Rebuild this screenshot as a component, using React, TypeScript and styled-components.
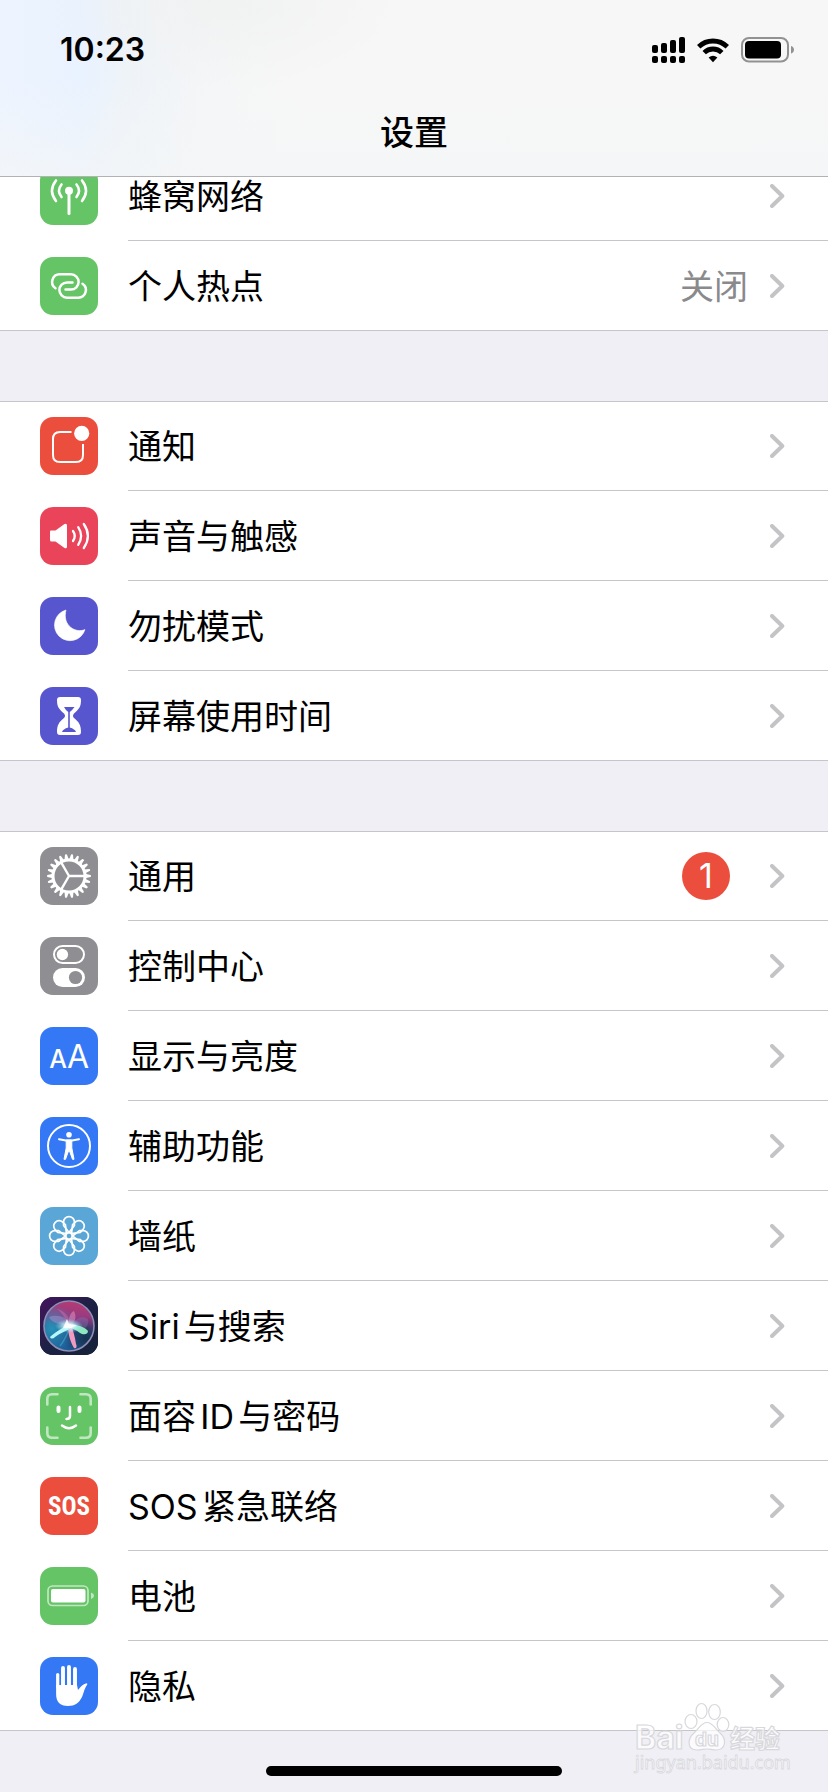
import React from "react";
import styled, { createGlobalStyle } from "styled-components";

const GlobalStyle = createGlobalStyle`
  * { box-sizing: border-box; }
  html, body { margin: 0; padding: 0; }
  body {
    background: #f0eff5;
    color: #000;
    font-family: Inter, "Noto Sans CJK SC", sans-serif;
    font-size: 34px;
    line-height: 48px;
    text-autospace: normal;
  }
`;

const Screen = styled.div`
  position: relative;
  min-height: 100vh;
`;

const Header = styled.header`
  position: sticky;
  top: 0;
  z-index: 2;
  background:
    radial-gradient(ellipse 180px 90px at 27% 0, rgba(240, 241, 241, 0.9), rgba(242, 243, 243, 0)),
    linear-gradient(to bottom, rgba(247, 247, 247, 0) 45%, rgba(244, 246, 247, 0.7) 100%),
    linear-gradient(to right, #edf4ff 0, #e9f2ff 10%, #eef3f8 15%, #f5f6f7 26%, #f7f7f7 36%);
  border-bottom: 1px solid #b2b2b4;
`;

const StatusBar = styled.div`
  display: flex;
  align-items: center;
  justify-content: space-between;
  height: 88px;
  padding: 11px 33px 0 60px;
`;

const Clock = styled.time`
  font-size: 32px;
  font-weight: 600;
`;

const StatusIcons = styled.div`
  display: flex;
  align-items: center;
  gap: 12px;
`;

const Title = styled.h1`
  display: flex;
  align-items: center;
  justify-content: center;
  height: 88px;
  margin: 0;
  padding-top: 2px;
  font-size: 34px;
  font-weight: 500;
`;

const Content = styled.main`
  display: flex;
  flex-direction: column;
  gap: 70px;
  margin-top: -26px;
  padding-bottom: 61px;
`;

const Group = styled.ul`
  margin: 0;
  padding: 0;
  list-style: none;
  background: #fff;
  box-shadow: inset 0 1px 0 #c6c5ca;
`;

const Item = styled.li`
  &:last-child > a { border-bottom: 1px solid #c6c5ca; }
  &:last-child > a > div { border-bottom: 0; height: 89px; }
`;

const Row = styled.a`
  display: flex;
  align-items: flex-start;
  gap: 30px;
  height: 90px;
  padding-left: 40px;
  color: inherit;
  text-decoration: none;
`;

const Tile = styled.svg`
  flex: none;
  width: 58px;
  height: 58px;
  margin-top: 16px;
  border-radius: 13px;
  background: ${(p: { $color: string }) => p.$color};
`;

const RowBody = styled.div`
  display: flex;
  flex: 1;
  align-items: center;
  height: 90px;
  padding-right: 43px;
  border-bottom: 1px solid #c6c5ca;
`;

const Label = styled.span`
  flex: 1;
  padding-top: 2px;
`;

const Value = styled.span`
  margin-right: 22px;
  padding-top: 2px;
  color: #8a8a8d;
`;

const Badge = styled.span`
  width: 48px;
  height: 48px;
  margin-right: 40px;
  border-radius: 50%;
  background: #eb4e3d;
  color: #fff;
  text-align: center;
`;

const Watermark = styled.svg`
  position: absolute;
  right: 40px;
  bottom: 16px;
  width: 160px;
  height: 76px;
  overflow: visible;
  pointer-events: none;
`;

const HomeIndicator = styled.div`
  position: fixed;
  z-index: 3;
  left: 50%;
  bottom: 16px;
  width: 296px;
  height: 10px;
  margin-left: -148px;
  border-radius: 5px;
  background: #000;
`;

const Chevron = () => (
  <svg width="15" height="24" viewBox="0 0 15 24" aria-hidden="true">
    <path d="M2 2L12.300 12L2 22" fill="none" stroke="#c4c4c6" strokeWidth="4" strokeLinecap="round" strokeLinejoin="round" />
  </svg>
);

const GREEN = "#65c466";
const RED = "#eb4e3d";
const PINK = "#ea445a";
const INDIGO = "#5756ce";
const GREY = "#8e8e93";
const BLUE = "#3478f6";
const SKY = "#5aa7d7";

const stroke = (width: number) => ({
  fill: "none",
  stroke: "#fff",
  strokeWidth: width,
  strokeLinecap: "round" as const,
  strokeLinejoin: "round" as const,
});

const cellular = (
  <>
    <circle cx="29" cy="23.700" r="4" fill="#fff" />
    <path d="M29 25V46.500" {...stroke(3)} />
    <path d="M21.500 17.500Q16.500 23.700 21.500 30M36.500 17.500Q41.500 23.700 36.500 30M16 13.500Q8 23.700 16 34M42 13.500Q50 23.700 42 34" {...stroke(2.6)} />
  </>
);

const link = "M15.500 31.200A7.600 7.600 0 0 1 20 17.300H31A7.600 7.600 0 0 1 31 32.500H25.500";
const hotspot = (
  <g {...stroke(2.5)}>
    <path d={link} />
    <path d={link} transform="rotate(180 29 29)" />
  </g>
);

const notifications = (
  <>
    <path d="M31.500 15H20Q13 15 13 22V38Q13 45 20 45H36Q43 45 43 38V27" fill="none" stroke="#fff" strokeWidth="2" />
    <circle cx="41.700" cy="16.400" r="7.600" fill="#fff" />
  </>
);

const sounds = (
  <>
    <path d="M11 23.500H15.500L24.500 17Q27 15.800 27 18.500V39.500Q27 42.200 24.500 41L15.500 34.500H11.500Q10 34.500 10 33V24.500Q10 23.500 11 23.500Z" fill="#fff" />
    <path d="M33 24Q36.500 29 33 34M38.200 20.200Q44 29 38.200 37.800M43.800 17Q52 29 43.800 41" {...stroke(2.3)} />
  </>
);

const moon = <path d="M26 13A15.600 15.600 0 1 0 45 32.600C36 36.500 22 29 26 13Z" fill="#fff" stroke="#fff" strokeWidth="0.600" strokeLinejoin="round" />;

const hourglass = (
  <>
    <path d="M20 10H38Q41 10 41 13C41 20 39 22 34 26.500Q32 28.800 34 31C39 35 41 38 41 45Q41 48 38 48H20Q17 48 17 45C17 38 19 35 24 31Q26 28.800 24 26.500C19 22 17 20 17 13Q17 10 20 10Z" fill="#fff" />
    <path d="M24 20H34.500Q32.500 23 29.800 25V40.500Q35 42 36 45H22Q23 42 28.200 40.500V25Q25.500 23 24 20Z" fill={INDIGO} />
  </>
);

const teeth = Array.from({ length: 22 }, (_, i) => i * (360 / 22));
const gear = (
  <>
    {teeth.map((angle) => (
      <path key={angle} d="M45 26.800L50.600 28Q51.500 29 50.600 30L45 31.200Z" fill="#fff" transform={`rotate(${angle} 29 29)`} />
    ))}
    <circle cx="29" cy="29" r="16" fill="none" stroke="#fff" strokeWidth="3" />
    <path d="M45 29H29L21 15.200M29 29L21 42.800" {...stroke(2.4)} />
  </>
);

const controls = (
  <>
    <rect x="14" y="9" width="30" height="17" rx="8.500" fill="none" stroke="#fff" strokeWidth="2" />
    <circle cx="22.400" cy="17.500" r="5.700" fill="#fff" />
    <rect x="13" y="31" width="32" height="19" rx="9.500" fill="#fff" />
    <circle cx="35.500" cy="40.500" r="6.600" fill={GREY} />
  </>
);

const display = (
  <g fill="#fff" fontFamily="Inter, sans-serif" textAnchor="middle">
    <text x="18" y="41" fontSize="25" fontWeight="500">A</text>
    <text x="38" y="41" fontSize="32">A</text>
  </g>
);

const accessibility = (
  <>
    <circle cx="29" cy="29" r="21" fill="none" stroke="#fff" strokeWidth="2" />
    <circle cx="29" cy="17.800" r="2.800" fill="#fff" />
    <path d="M19 22.200L26 23.500H32L39 22.200" {...stroke(2)} />
    <path d="M26.200 23H31.800V31L34 42.300H32.500L29.500 34H28.500L25.500 42.300H24L26.200 31Z" fill="#fff" stroke="#fff" strokeWidth="1" strokeLinejoin="round" />
  </>
);

const petals = [0, 45, 90, 135, 180, 225, 270, 315];
const wallpaper = (
  <g fill="none" stroke="#fff" strokeWidth="1.700">
    {petals.map((angle) => (
      <path
        key={angle}
        d="M29 25.500L23.600 18.500V15A5.400 5.400 0 0 1 34.400 15V18.500Z"
        transform={`rotate(${angle} 29 29)`}
      />
    ))}
    <circle cx="29" cy="29" r="3.300" />
  </g>
);

const siri = (
  <>
    <defs>
      <linearGradient id="siri-tile" x1="0" y1="0" x2="1" y2="1">
        <stop offset="0" stopColor="#45145f" />
        <stop offset="0.500" stopColor="#1d2145" />
        <stop offset="1" stopColor="#152238" />
      </linearGradient>
      <linearGradient id="siri-orb" x1="0.600" y1="0" x2="0.400" y2="1">
        <stop offset="0" stopColor="#b83a72" />
        <stop offset="0.350" stopColor="#8c3c86" />
        <stop offset="0.600" stopColor="#2c4a86" />
        <stop offset="1" stopColor="#1c5f9a" />
      </linearGradient>
      <radialGradient id="siri-teal" cx="0.150" cy="0.550" r="0.500">
        <stop offset="0" stopColor="#22a5c4" stopOpacity="0.800" />
        <stop offset="1" stopColor="#22a5c4" stopOpacity="0" />
      </radialGradient>
      <radialGradient id="siri-shade" cx="0.850" cy="0.750" r="0.450">
        <stop offset="0" stopColor="#123048" stopOpacity="0.900" />
        <stop offset="1" stopColor="#123048" stopOpacity="0" />
      </radialGradient>
      <radialGradient id="siri-core">
        <stop offset="0" stopColor="#fff" />
        <stop offset="0.350" stopColor="#d8fbff" stopOpacity="0.800" />
        <stop offset="1" stopColor="#8fe9f5" stopOpacity="0" />
      </radialGradient>
    </defs>
    <rect width="58" height="58" fill="url(#siri-tile)" />
    <circle cx="29" cy="29" r="24.500" fill="url(#siri-orb)" />
    <circle cx="29" cy="29" r="24.500" fill="url(#siri-teal)" />
    <circle cx="29" cy="29" r="24.500" fill="url(#siri-shade)" />
    <circle cx="29" cy="29" r="25" fill="none" stroke="#8f8fb5" strokeWidth="1.600" />
    <path d="M30 28C18 28 11 25 9 20C16 17 28 20 31 28Z" fill="#d0a0e0" opacity="0.350" />
    <path d="M29 29C28 20 31 15 34 14C37 20 35 26 30 29Z" fill="#ffb0d0" opacity="0.400" />
    <path d="M17 12C24 13 30 20 31 28L27 26C25 20 21 15 17 12Z" fill="#f07ab0" opacity="0.350" />
    <path d="M31 28C36 21 43 18 48 22C49 26 47 30 45 31Z" fill="#8d7ab8" opacity="0.350" />
    <path d="M30 28C22 30 13 37 10 40C11 42 13 42 15 40C20 36 27 34 32 30Z" fill="#b5f7fa" />
    <path d="M28 28C36 27 45 30 48 34C48 38 43 38 40 36C36 33 33 31 28 31Z" fill="#8ce8c0" />
    <path d="M28 29C28 38 31 46 34 51C37 52 37 49 36 47C35 40 33 33 31 28Z" fill="#f49ac0" />
    <path d="M30 30C27 38 24 44 20 49" stroke="#41b5e0" strokeWidth="1.500" opacity="0.500" fill="none" />
    <ellipse cx="29" cy="29" rx="14" ry="7" fill="url(#siri-core)" />
    <path d="M27 22L29 27L37 28L31 31L23 31Z" fill="#fff" opacity="0.850" />
  </>
);

const face = (
  <>
    <path
      d="M7.300 17.500V12Q7.300 7.300 12 7.300H17.500M40.500 7.300H46Q50.700 7.300 50.700 12V17.500M50.700 40.500V46Q50.700 50.700 46 50.700H40.500M17.500 50.700H12Q7.300 50.700 7.300 46V40.500"
      {...stroke(2.6)}
      opacity="0.600"
    />
    <path d="M18.500 20.500V24M39.500 20.500V24" {...stroke(4)} />
    <path d="M30 20V29Q30 32 26.500 32M22 38.500Q29 44 36 38.500" {...stroke(2.5)} />
  </>
);

const sos = (
  <text x="29" y="38" textAnchor="middle" fill="#fff" fontFamily="'Liberation Sans Narrow', 'Roboto Condensed', Roboto, sans-serif" fontSize="25" fontWeight="700">
    SOS
  </text>
);

const battery = (
  <>
    <rect x="8" y="19" width="40" height="19.500" rx="4.500" fill="none" stroke="#fff" strokeWidth="1.700" opacity="0.600" />
    <rect x="11" y="22" width="34.500" height="13.500" rx="2" fill="#fff" />
    <path d="M51 25.500Q54 26.500 54 28.700Q54 31 51 32Z" fill="#fff" opacity="0.600" />
  </>
);

const hand = (
  <>
    <path d="M17.700 17.500V30" {...stroke(3.2)} />
    <path d="M23 11V30M29 10V30M35 12V30" {...stroke(3.9)} />
    <path d="M16.100 28H37L38 33Q42.500 27 46.500 26.300Q48 26.500 47 28C44 32 43.500 37 42 40C39 46 35 49 28 49C20 49 16.100 45 16.100 37Z" fill="#fff" />
  </>
);

type Setting = {
  label: string;
  color: string;
  icon: React.ReactNode;
  value?: string;
  badge?: string;
};

const groups: Setting[][] = [
  [
    { label: "蜂窝网络", color: GREEN, icon: cellular },
    { label: "个人热点", color: GREEN, icon: hotspot, value: "关闭" },
  ],
  [
    { label: "通知", color: RED, icon: notifications },
    { label: "声音与触感", color: PINK, icon: sounds },
    { label: "勿扰模式", color: INDIGO, icon: moon },
    { label: "屏幕使用时间", color: INDIGO, icon: hourglass },
  ],
  [
    { label: "通用", color: GREY, icon: gear, badge: "1" },
    { label: "控制中心", color: GREY, icon: controls },
    { label: "显示与亮度", color: BLUE, icon: display },
    { label: "辅助功能", color: BLUE, icon: accessibility },
    { label: "墙纸", color: SKY, icon: wallpaper },
    { label: "Siri与搜索", color: "#1d2145", icon: siri },
    { label: "面容ID与密码", color: GREEN, icon: face },
    { label: "SOS紧急联络", color: RED, icon: sos },
    { label: "电池", color: GREEN, icon: battery },
    { label: "隐私", color: BLUE, icon: hand },
  ],
];

const signalBars = [
  { x: 0, y: 8 },
  { x: 9, y: 6 },
  { x: 18, y: 3 },
  { x: 27, y: 0 },
];

const Signal = () => (
  <svg width="33" height="26" viewBox="0 0 33 26" aria-hidden="true">
    {signalBars.map(({ x, y }) => (
      <g key={x}>
        <rect x={x} y={y} width="6" height={16 - y} rx="2" />
        <rect x={x} y="19" width="6" height="7" rx="2" />
      </g>
    ))}
  </svg>
);

const Wifi = () => (
  <svg width="32" height="26" viewBox="0 0 32 26" aria-hidden="true">
    <g fill="none" stroke="#000" strokeWidth="4.800">
      <path d="M1.700 9.800A20.500 20.500 0 0 1 30.300 9.800" />
      <path d="M7.200 15.600A12.500 12.500 0 0 1 24.800 15.600" />
    </g>
    <path d="M16 25.200L11.600 20.600Q16 17 20.400 20.600Z" />
  </svg>
);

const Battery = () => (
  <svg width="54" height="26" viewBox="0 0 54 26" aria-hidden="true">
    <rect x="1" y="1" width="46" height="23.500" rx="7" fill="none" stroke="#929292" strokeWidth="2" />
    <rect x="4" y="4" width="36" height="17.500" rx="4" />
    <path d="M50 9Q53 10 53 12.800Q53 15.600 50 16.600Z" fill="#929292" />
  </svg>
);

export default function App() {
  return (
    <Screen>
      <GlobalStyle />
      <Header>
        <StatusBar>
          <Clock>10:23</Clock>
          <StatusIcons>
            <Signal />
            <Wifi />
            <Battery />
          </StatusIcons>
        </StatusBar>
        <Title>设置</Title>
      </Header>
      <Content>
        {groups.map((group, index) => (
          <Group key={index}>
            {group.map(({ label, color, icon, value, badge }) => (
              <Item key={label}>
                <Row href="#">
                  <Tile $color={color} viewBox="0 0 58 58" aria-hidden="true">
                    {icon}
                  </Tile>
                  <RowBody>
                    <Label>{label}</Label>
                    {value && <Value>{value}</Value>}
                    {badge && <Badge>{badge}</Badge>}
                    <Chevron />
                  </RowBody>
                </Row>
              </Item>
            ))}
          </Group>
        ))}
      </Content>
      <Watermark viewBox="0 0 160 76">
        <g fill="#fff" fillOpacity="0.700" stroke="#d8d8dc" strokeWidth="1.200" fontFamily="Inter, 'Noto Sans CJK SC', sans-serif">
          <text x="7" y="49" fontSize="32" fontWeight="700">Bai</text>
          <ellipse cx="63" cy="21.500" rx="6" ry="7" />
          <ellipse cx="73.500" cy="11" rx="5.500" ry="7.500" />
          <ellipse cx="86.500" cy="12" rx="5.800" ry="7.500" />
          <ellipse cx="95" cy="24.500" rx="5.800" ry="7" />
          <path d="M79 22.500C85 22.500 87 29 92 33C99 39 98 50 88 50C84 50 82 49 79 49C76 49 73 50 69 50C59 50 59 39 66 33C71 29 73 22.500 79 22.500Z" />
          <text x="67" y="46" fontSize="19" fontWeight="700">du</text>
          <text x="102" y="48" fontSize="25" fontWeight="700">经验</text>
          <text x="7" y="69" fontSize="18" strokeWidth="0.800" fontFamily="'Noto Sans', sans-serif">jingyan.baidu.com</text>
        </g>
      </Watermark>
      <HomeIndicator />
    </Screen>
  );
}
